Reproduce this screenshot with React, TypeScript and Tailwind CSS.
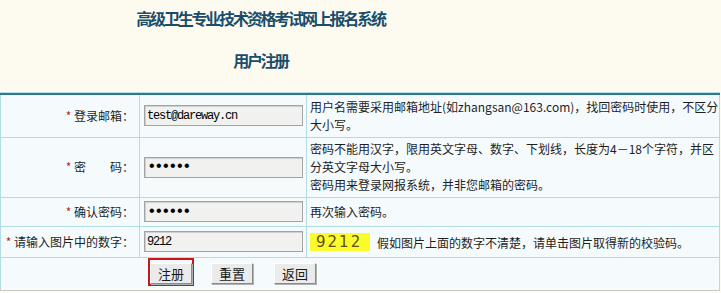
import React from 'react'

const font = { fontFamily: '"Noto Sans CJK SC", "Liberation Sans", sans-serif' }

function Label({ children }: { children: React.ReactNode }) {
  return (
    <td className="w-[139px] border border-[#b3dbe3] pr-[5px] text-right align-middle text-[12px] leading-[18px] text-[#1e1e1e]">
      <span className="text-[#c81e1e]">*</span> {children}
    </td>
  )
}

function Field({ type, value }: { type: string; value: string }) {
  const isPassword = type === 'password'
  return (
    <td className="w-[167px] border border-[#b3dbe3] pl-[4px] align-middle">
      <input
        type={type}
        defaultValue={value}
        className={
          isPassword
            ? 'block h-[21px] w-[159px] border border-[#a3a3a3] bg-[#f1f1ef] px-[2px] text-[16px] tracking-[-2.6px] text-black shadow-[inset_1px_1px_0_#d0d0d0] outline-none'
            : 'block h-[21px] w-[159px] border border-[#a3a3a3] bg-[#f1f1ef] px-[2px] text-[12px] tracking-[-1.2px] text-black shadow-[inset_1px_1px_0_#d0d0d0] outline-none'
        }
        style={{ fontFamily: '"Liberation Mono", monospace' }}
      />
    </td>
  )
}

function Hint({ children }: { children: React.ReactNode }) {
  return (
    <td className="border border-[#b3dbe3] pl-[3px] align-middle text-[12px] leading-[18px] text-[#1e1e1e]">
      {children}
    </td>
  )
}

function OldButton({ children }: { children: React.ReactNode }) {
  return (
    <button
      type="button"
      className="h-[21px] w-[42px] border border-t-[#ffffff] border-l-[#ffffff] border-r-[#8a8a8a] border-b-[#8a8a8a] bg-[#ebebeb] text-[13px] leading-[19px] text-[#1a1a1a] shadow-[1px_1px_0_#b0b0b0]"
    >
      {children}
    </button>
  )
}

export default function App() {
  return (
    <div className="h-[293px] w-[721px] overflow-hidden bg-[#fdfbf0]" style={font}>
      <div className="h-[92px] w-[521px] pt-[7px] text-center font-bold text-[#1a4d6b]">
        <h1 className="text-[16px] leading-[22px] tracking-[-2.2px]">高级卫生专业技术资格考试网上报名系统</h1>
        <h2 className="mt-[20px] text-[16px] leading-[22px] tracking-[-2.4px]">用户注册</h2>
      </div>

      <div className="w-[720px] border-t border-[#b8e0e8]">
        <table className="w-[720px] border-collapse border-t-2 border-t-[#33788a] bg-[#f5fbfd]">
          <tbody>
            <tr className="h-[43px]">
              <Label>登录邮箱：</Label>
              <Field type="text" value="test@dareway.cn" />
              <Hint>
                用户名需要采用邮箱地址(如zhangsan@163.com)，找回密码时使用，不区分
                <br />
                大小写。
              </Hint>
            </tr>
            <tr className="h-[60px]">
              <Label>密　　码：</Label>
              <Field type="password" value="123456" />
              <Hint>
                密码不能用汉字，限用英文字母、数字、下划线，长度为4－18个字符，并区
                <br />
                分英文字母大小写。
                <br />
                密码用来登录网报系统，并非您邮箱的密码。
              </Hint>
            </tr>
            <tr className="h-[29px]">
              <Label>确认密码：</Label>
              <Field type="password" value="123456" />
              <Hint>再次输入密码。</Hint>
            </tr>
            <tr className="h-[31px]">
              <Label>请输入图片中的数字：</Label>
              <Field type="text" value="9212" />
              <Hint>
                <div className="flex items-end gap-[7px]">
                  <span
                    className="inline-block h-[18px] w-[60px] bg-[#fbfb2c] pl-[6px] text-[15px] leading-[18px] tracking-[2px] text-[#5e4f14]"
                    style={{ fontFamily: '"DejaVu Sans", sans-serif' }}
                  >
                    9212
                  </span>
                  <span className="leading-[16px]">假如图片上面的数字不清楚，请单击图片取得新的校验码。</span>
                </div>
              </Hint>
            </tr>
            <tr className="h-[33px]">
              <td colSpan={3} className="border border-[#b3dbe3] border-b-[#c9c9c0] pl-[147px] pb-[3px] align-middle">
                <div className="flex items-center">
                  <span className="border-2 border-[#c9161c]">
                    <OldButton>注册</OldButton>
                  </span>
                  <span className="ml-[17px]">
                    <OldButton>重置</OldButton>
                  </span>
                  <span className="ml-[21px]">
                    <OldButton>返回</OldButton>
                  </span>
                </div>
              </td>
            </tr>
          </tbody>
        </table>
      </div>
    </div>
  )
}
